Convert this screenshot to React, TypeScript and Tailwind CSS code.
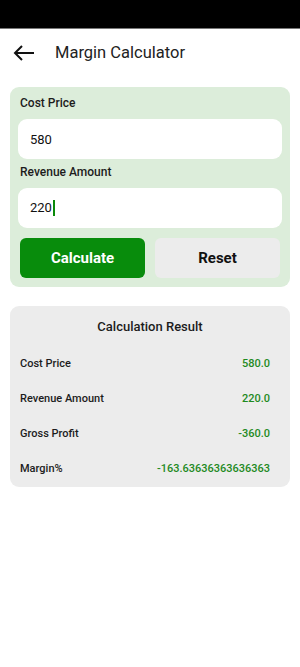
import { useState } from 'react'

function ResultRow({ label, value }: { label: string; value: string }) {
  return (
    <div className="flex items-center justify-between h-[35px]">
      <span className="text-[11px] font-medium text-[#1c1c1c]">{label}</span>
      <span className="text-[11px] font-medium text-[#1f8a1f]">{value}</span>
    </div>
  )
}

export default function App() {
  const [cost, setCost] = useState('580')
  const [revenue, setRevenue] = useState('220')

  const c = parseFloat(cost) || 0
  const r = parseFloat(revenue) || 0
  const profit = r - c

  return (
    <div className="w-[300px] h-[667px] bg-white font-['Roboto',sans-serif]">
      <div className="h-[29px] bg-black border-b border-[#777]" />

      <div className="flex items-center h-[48px] px-[13px]">
        <svg width="22" height="16" viewBox="0 0 22 16" fill="none" stroke="#111" strokeWidth="2">
          <path d="M21 8H2M9 1L2 8l7 7" />
        </svg>
        <h1 className="ml-[20px] text-[16.5px] text-[#222]">Margin Calculator</h1>
      </div>

      <div className="mx-[10px] mt-[10px] rounded-[9px] bg-[#dcedda] px-[8px] pt-[8px] pb-[9px]">
        <p className="pl-[2px] text-[12px] font-medium text-[#1c1c1c] leading-[16px]">Cost Price</p>
        <input
          value={cost}
          onChange={e => setCost(e.target.value)}
          className="mt-[8px] w-full h-[40px] rounded-[9px] bg-white px-[12px] text-[13px] text-[#111] outline-none"
        />
        <p className="mt-[5px] pl-[2px] text-[12px] font-medium text-[#1c1c1c] leading-[16px]">Revenue Amount</p>
        <div className="mt-[8px] flex items-center w-full h-[40px] rounded-[9px] bg-white px-[12px]">
          <span className="text-[13px] text-[#111]">{revenue}</span>
          <span className="ml-[1px] w-[2px] h-[16px] bg-[#0a8a0a]" />
        </div>
        <div className="mt-[10px] flex gap-[10px] px-[2px]">
          <button
            onClick={() => {}}
            className="flex-1 h-[40px] rounded-[6px] bg-[#088c0c] text-white text-[15px] font-bold"
          >
            Calculate
          </button>
          <button
            onClick={() => { setCost(''); setRevenue('') }}
            className="flex-1 h-[40px] rounded-[6px] bg-[#ececec] text-[#111] text-[15px] font-bold"
          >
            Reset
          </button>
        </div>
      </div>

      <div className="mx-[10px] mt-[19px] rounded-[9px] bg-[#ececec] pl-[10px] pr-[20px] pt-[12px]">
        <p className="text-center pl-[10px] text-[13px] font-medium text-[#1c1c1c] leading-[18px]">Calculation Result</p>
        <div className="mt-[11px]">
          <ResultRow label="Cost Price" value={c.toFixed(1)} />
          <ResultRow label="Revenue Amount" value={r.toFixed(1)} />
          <ResultRow label="Gross Profit" value={profit.toFixed(1)} />
          <ResultRow label="Margin%" value="-163.63636363636363" />
        </div>
      </div>
    </div>
  )
}
